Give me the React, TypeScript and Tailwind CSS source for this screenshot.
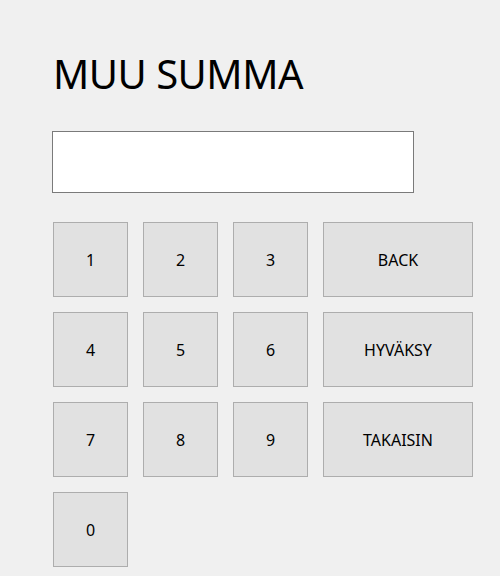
export default function App() {
  const keys = ["1", "2", "3", "BACK", "4", "5", "6", "HYVÄKSY", "7", "8", "9", "TAKAISIN", "0"];
  return (
    <div className="w-[500px] h-[576px] overflow-hidden bg-[#f0f0f0] text-black pl-[53px] pt-[50px]" style={{ fontFamily: '"Noto Sans", "Open Sans", sans-serif' }}>
      <h1 className="text-[40px] leading-[48px] h-[48px] font-normal tracking-[-0.5px]">MUU SUMMA</h1>
      <div className="mt-[33px] -ml-px w-[362px] h-[62px] bg-white border border-[#7a7a7a]" />
      <div className="mt-[29px] grid grid-cols-[75px_75px_75px_150px] auto-rows-[75px] gap-[15px]">
        {keys.map((k) => (
          <button key={k} className="bg-[#e1e1e1] border border-[#adadad] text-[16px] flex items-center justify-center">
            {k}
          </button>
        ))}
      </div>
    </div>
  );
}
